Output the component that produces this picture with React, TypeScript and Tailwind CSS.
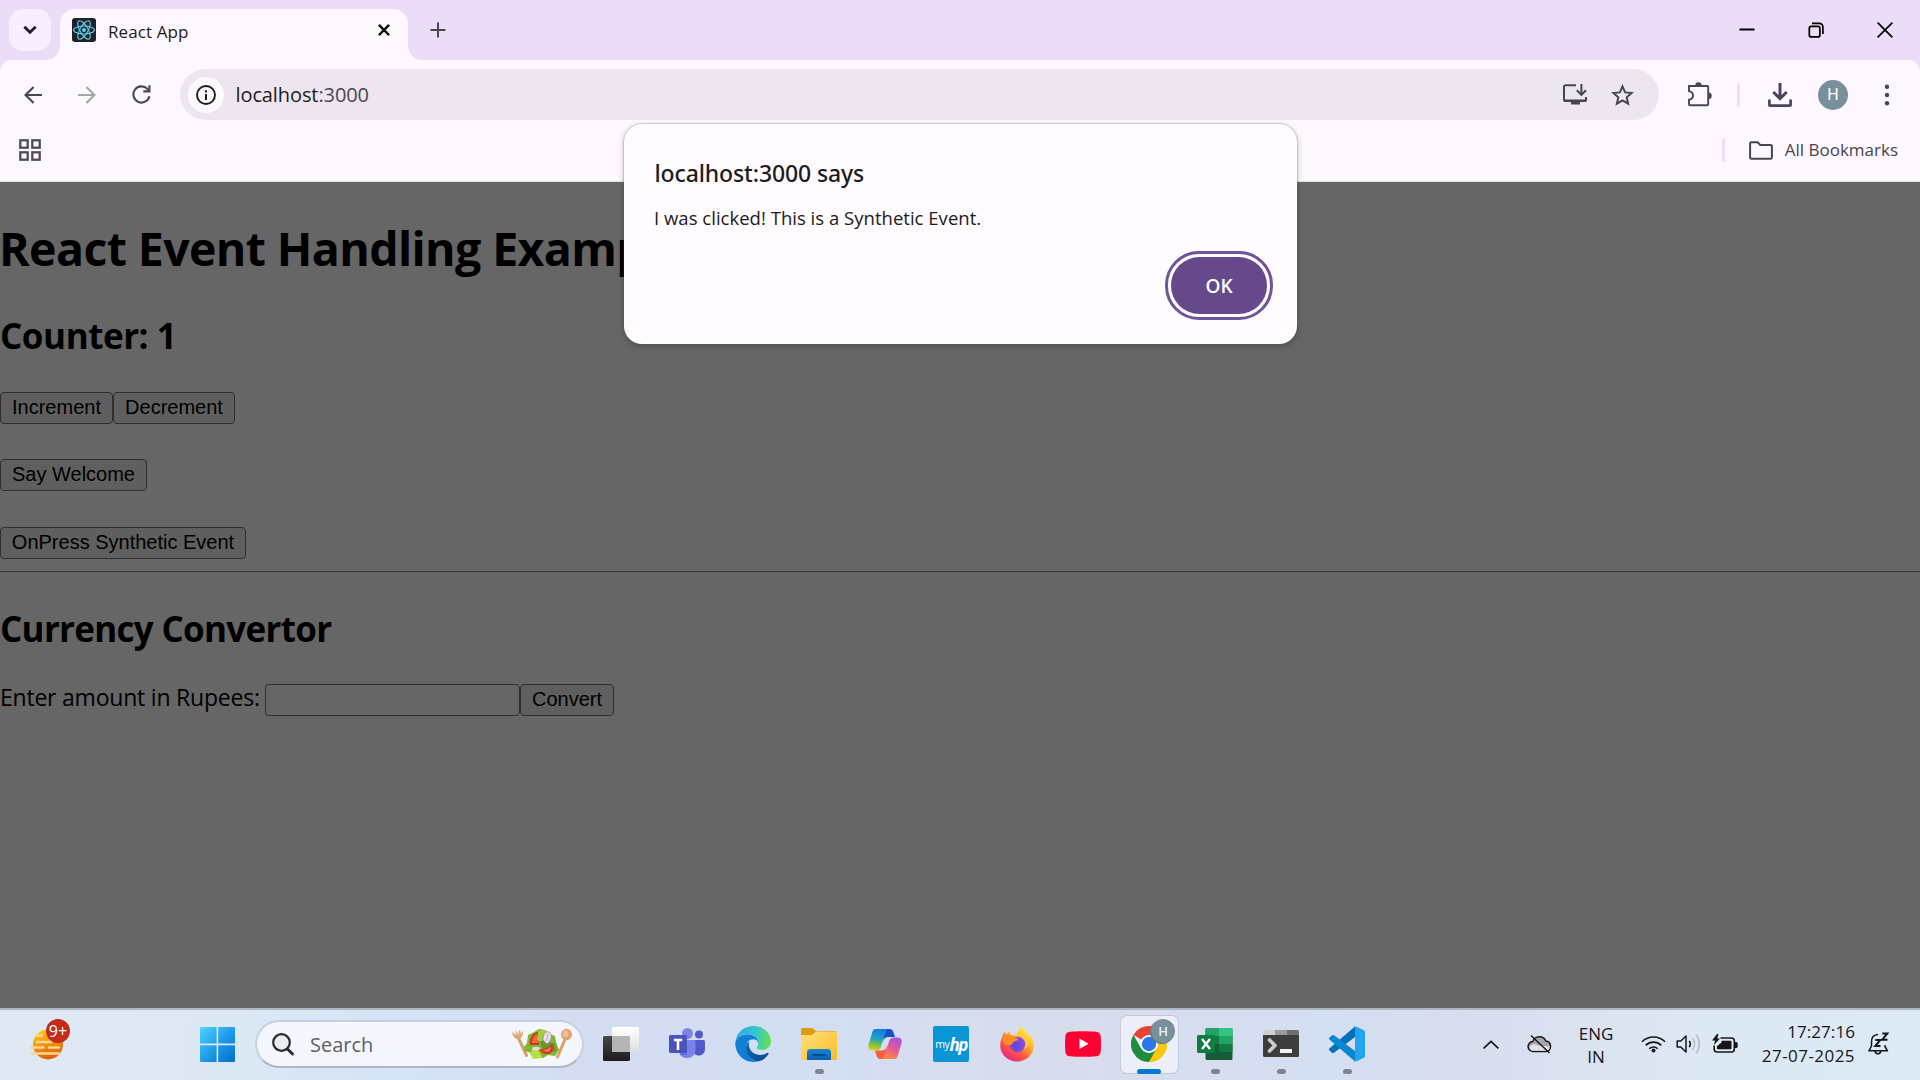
import React from "react";

/* ---------- Browser chrome ---------- */

function ReactFavicon() {
  return (
    <svg width="24" height="24" viewBox="0 0 24 24">
      <rect width="24" height="24" rx="3" fill="#20232a" />
      <g fill="none" stroke="#5fd3f0" strokeWidth="1.1">
        <ellipse cx="12" cy="12" rx="10.4" ry="4" />
        <ellipse cx="12" cy="12" rx="10.4" ry="4" transform="rotate(60 12 12)" />
        <ellipse cx="12" cy="12" rx="10.4" ry="4" transform="rotate(120 12 12)" />
      </g>
      <circle cx="12" cy="12" r="2" fill="#5fd3f0" />
    </svg>
  );
}

function TabStrip() {
  return (
    <div className="flex h-[60px] shrink-0 bg-[#ebddf7] pl-[9px]">
      <div className="mt-[9px] flex h-[42px] w-[42px] items-center justify-center rounded-[14px] bg-[#f9eeff]">
        <svg width="14" height="10" viewBox="0 0 14 10" fill="none" stroke="#1d1b20" strokeWidth="2.7">
          <path d="M1.3 1.7 7 7.3l5.7-5.6" />
        </svg>
      </div>
      <svg className="ml-[-6px] mt-[45px]" width="15" height="15" viewBox="0 0 15 15">
        <path d="M15 0v15H0C9 15 15 9 15 0Z" fill="#fef7ff" />
      </svg>
      <div className="mt-[9px] flex h-[51px] w-[348px] rounded-t-[15px] bg-[#fef7ff] pl-3">
        <div className="flex h-[42px] w-full items-center">
          <ReactFavicon />
          <span className="ml-3 mt-[3px] flex-1 text-[17px] leading-6 tracking-[0.09px] text-[#1d1b20]">React App</span>
          <svg className="mr-[18px]" width="12" height="12" viewBox="0 0 12 12" fill="none" stroke="#0f0d12" strokeWidth="2.4">
            <path d="m.9.9 10.2 10.2M11.1.9.9 11.1" />
          </svg>
        </div>
      </div>
      <svg className="mt-[45px]" width="15" height="15" viewBox="0 0 15 15">
        <path d="M0 0v15h15C6 15 0 9 0 0Z" fill="#fef7ff" />
      </svg>
      <svg className="ml-[7px] mt-[22px]" width="16" height="16" viewBox="0 0 16 16" stroke="#49454e" strokeWidth="2">
        <path d="M8 .5v15M.5 8h15" />
      </svg>
      <div className="ml-auto flex h-[59px] items-center pr-px">
        <div className="flex w-[69px] justify-center">
          <svg width="16" height="16" viewBox="0 0 16 16"><rect y="6.500" x=".5" width="15" height="2" fill="#000" /></svg>
        </div>
        <div className="flex w-[69px] justify-center">
          <svg width="16" height="16" viewBox="0 0 16 16" fill="none" stroke="#000" strokeWidth="1.7">
            <rect x="1.3" y="4.3" width="10.6" height="10.6" rx="2" />
            <path d="M4 1.3h7.2a3.7 3.7 0 0 1 3.7 3.7v7" />
          </svg>
        </div>
        <div className="flex w-[69px] justify-center">
          <svg width="16" height="16" viewBox="0 0 16 16" stroke="#000" strokeWidth="1.7">
            <path d="m.6.6 14.8 14.8M15.4.6.6 15.4" />
          </svg>
        </div>
      </div>
    </div>
  );
}

function Toolbar() {
  return (
    <div className="bg-[#ebddf7]">
      <div className="flex h-[69px] items-center rounded-t-[12px] bg-[#fef7ff] pl-[6px]">
        <div className="flex h-[51px] w-[54px] items-center justify-center">
          <svg width="18" height="18" viewBox="0 0 18 18" fill="none" stroke="#4a4458" strokeWidth="2.1">
            <path d="M18 9H1.8M9.6.9 1.5 9l8.1 8.1" />
          </svg>
        </div>
        <div className="flex h-[51px] w-[54px] items-center justify-center">
          <svg width="18" height="18" viewBox="0 0 18 18" fill="none" stroke="#a9a4ab" strokeWidth="2.1">
            <path d="M0 9h16.2M8.4.9 16.5 9l-8.1 8.1" />
          </svg>
        </div>
        <div className="flex h-[51px] w-[54px] items-center justify-center">
          <svg width="19" height="19" viewBox="0 0 19 19">
            <path d="M17.4 11.2A8.1 8.1 0 1 1 15.400 3.900L17.2 5.700" fill="none" stroke="#4a4458" strokeWidth="2.1" />
            <path d="M18.5.2v7.200h-7.200V5.300h5.100V.2Z" fill="#4a4458" />
          </svg>
        </div>
        <div className="ml-[12px] flex h-[51px] flex-1 items-center rounded-full bg-[#ede6f0] pl-[8px]">
          <div className="flex h-9 w-9 items-center justify-center rounded-full bg-[#fef7ff]">
            <svg width="20" height="20" viewBox="0 0 20 20">
              <circle cx="10" cy="10" r="9" fill="none" stroke="#1d1b20" strokeWidth="1.9" />
              <path d="M9 9h2v6H9zM9 5.2h2v2.200H9z" fill="#1d1b20" />
            </svg>
          </div>
          <span className="ml-[11.5px] flex-1 text-[20px] leading-7 tracking-[-0.1px] text-[#49454e]">
            <span className="text-[#1d1b20]">localhost</span>:3000
          </span>
          <svg className="mr-[24px]" width="24" height="22" viewBox="0 0 24 22">
            <path d="M13 1.200H2.600A1.600 1.600 0 0 0 1 2.800v12.600A1.600 1.600 0 0 0 2.600 17h18.800a1.600 1.600 0 0 0 1.600-1.600V13" fill="none" stroke="#49454e" strokeWidth="2" />
            <path d="M8 17h9v3.500H8zM1 15.500h22v1.800H1z" fill="#49454e" />
            <path d="M18.400 0v10M13.800 6.300l4.600 4.600 4.600-4.600" fill="none" stroke="#49454e" strokeWidth="2" />
          </svg>
          <svg className="mr-[25.5px]" width="23" height="22" viewBox="0 0 23 22" fill="none" stroke="#49454e" strokeWidth="2">
            <path d="m11.5 2.400 2.600 6 6.500.600-4.900 4.300 1.400 6.400-5.600-3.400-5.600 3.400 1.400-6.400L2.400 9l6.500-.600Z" />
          </svg>
        </div>
        <svg className="ml-[28px] mr-px" width="25" height="25" viewBox="0 0 25 25">
          <path d="M2 4h18.200a1 1 0 0 1 1 1v17.300a1 1 0 0 1-1 1H3a1 1 0 0 1-1-1v-4.600c5.300-.9 5.300-7.700 0-8.600Z" fill="none" stroke="#4a4458" strokeWidth="1.900" />
          <path d="M8.300 3.500a3.200 3.200 0 0 1 6.400 0ZM21.500 10.500a3.200 3.200 0 0 1 0 6.400Z" fill="#4a4458" />
        </svg>
        <div className="ml-[24px] h-6 w-[3px] rounded-full bg-[#eaddff]" />
        <svg className="ml-[28px]" width="24" height="24" viewBox="0 0 24 24" fill="none" stroke="#4a4458">
          <path d="M12 0v14.500M5.300 9l6.700 6.700L18.700 9" strokeWidth="3" />
          <path d="M1.400 16.500V22a.6.6 0 0 0 .6.600h20a.6.6 0 0 0 .6-.6v-5.500" strokeWidth="2.700" />
        </svg>
        <div className="ml-[26px] flex h-[30px] w-[30px] items-center justify-center rounded-full bg-[#78909c] font-['Roboto'] text-[16px] leading-none text-white">H</div>
        <svg className="ml-[36px] mr-[30px]" width="6" height="22" viewBox="0 0 6 22" fill="#4a4458">
          <circle cx="3" cy="2.700" r="2.200" />
          <circle cx="3" cy="11" r="2.200" />
          <circle cx="3" cy="19.300" r="2.200" />
        </svg>
      </div>
    </div>
  );
}

function BookmarksBar() {
  return (
    <div className="flex h-[53px] shrink-0 items-center border-b border-[#e7e0e9] bg-[#fef7ff] pb-[10px] pl-[19px] pr-[22px]">
      <svg width="22" height="22" viewBox="0 0 22 22" fill="none" stroke="#514b57" strokeWidth="2.300">
        <rect x="1.300" y="1.300" width="7.400" height="7.400" />
        <rect x="13.300" y="1.300" width="7.400" height="7.400" />
        <rect x="1.300" y="13.300" width="7.400" height="7.400" />
        <rect x="13.300" y="13.300" width="7.400" height="7.400" />
      </svg>
      <div className="ml-auto h-6 w-[3px] rounded-full bg-[#eaddff]" />
      <svg className="ml-[24px]" width="24" height="19" viewBox="0 0 24 19" fill="none" stroke="#49454e" strokeWidth="2">
        <path d="M2.400 1.200h6.200l2.600 2.700h10.400A1.300 1.300 0 0 1 22.900 5.200v11.200a1.400 1.400 0 0 1-1.400 1.400h-19a1.400 1.400 0 0 1-1.400-1.400V2.500a1.300 1.300 0 0 1 1.300-1.300Z" />
      </svg>
      <span className="ml-[12px] text-[17px] leading-6 text-[#49454e]">All Bookmarks</span>
    </div>
  );
}

/* ---------- Page behind the alert ---------- */

function PageButton({ label, width }: { label: string; width: string }) {
  return (
    <button className={`${width} h-8 whitespace-nowrap rounded-[4px] border border-[#2f2f2f] bg-[#5f5f5f] font-['Liberation_Sans',sans-serif] text-[20px] leading-[28px] text-black`}>
      <span className="block h-[30px] leading-[29px]">{label}</span>
    </button>
  );
}

function Page() {
  return (
    <div className="min-h-0 flex-1 bg-[#666666] pt-[34px] text-black">
      <h1 className="ml-[-1px] h-16 whitespace-nowrap text-[46.5px] font-bold leading-[64px] tracking-[-0.620px]">React Event Handling Example</h1>
      <h2 className="mt-[32px] text-[35px] font-bold leading-[48px] tracking-[-0.450px]">Counter: 1</h2>
      <div className="mt-[32px] flex">
        <PageButton label="Increment" width="w-[113px]" />
        <PageButton label="Decrement" width="w-[122px]" />
      </div>
      <div className="mt-[35px] flex"><PageButton label="Say Welcome" width="w-[147px]" /></div>
      <div className="mt-[36px] flex"><PageButton label="OnPress Synthetic Event" width="w-[246px]" /></div>
      <div className="mt-[12px] h-[2px] border-t border-[#3c3c3c] bg-[#626262]" />
      <h2 className="mt-[32px] text-[35px] font-bold leading-[48px] tracking-[-0.700px]">Currency Convertor</h2>
      <div className="mt-[31px] flex items-start">
        <span className="w-[265px] whitespace-nowrap text-[23px] leading-[27px] tracking-[-0.220px]">Enter amount in Rupees:</span>
        <input className="h-8 w-[255px] rounded-[4px] border border-[#2f2f2f] bg-[#666666]" />
        <PageButton label="Convert" width="w-[94px]" />
      </div>
    </div>
  );
}

function AlertDialog() {
  return (
    <div className="absolute left-[624px] top-[124px] flex h-[220px] w-[673px] flex-col rounded-[18px] bg-[#fffbff] px-[30px] pt-[33px] shadow-[0_0_0_1px_rgba(90,90,90,0.220),0_2px_6px_rgba(0,0,0,0.250)]">
      <div className="pl-[0.5px] font-['Noto_Sans',sans-serif] text-[23px] font-medium leading-8 tracking-[-0.120px] text-[#1d1b20]">localhost:3000 says</div>
      <div className="mt-[15px] text-[18.5px] leading-7 tracking-[0.020px] text-[#1d1b20]">I was clicked! This is a Synthetic Event.</div>
      <div className="mr-[-6px] mt-[19px] flex h-[69px] w-[108px] self-end rounded-[34px] border-[3px] border-[#6f539b] p-[3px]">
        <button className="h-[57px] flex-1 rounded-[29px] bg-[#65498a] pt-px text-[19px] font-semibold leading-[56px] text-white">OK</button>
      </div>
    </div>
  );
}

/* ---------- Taskbar ---------- */

function WeatherWidget() {
  return (
    <div className="relative h-[44px] w-[44px]">
      <svg width="44" height="44" viewBox="0 0 44 44">
        <defs>
          <linearGradient id="sun" x1="0" y1="0" x2=".3" y2="1">
            <stop offset="0" stopColor="#ffd400" />
            <stop offset=".5" stopColor="#f79a0c" />
            <stop offset="1" stopColor="#e4600a" />
          </linearGradient>
        </defs>
        <circle cx="20" cy="25.500" r="15" fill="url(#sun)" />
        <g stroke="#f3d794" strokeWidth="2.400" strokeLinecap="round">
          <path d="M9 16.500h5M9 23h14M3.500 28.500h12M21 28.500h10M3.500 34.500h28" />
        </g>
      </svg>
      <div className="absolute left-[18.500px] top-0 flex h-6 w-6 items-center justify-center rounded-full bg-[#c42b1c] text-[16px] leading-none text-white">9+</div>
    </div>
  );
}

function StartIcon() {
  return (
    <svg width="35" height="35" viewBox="0 0 35 35">
      <defs>
        <linearGradient id="win" gradientUnits="userSpaceOnUse" x1="0" y1="0" x2="35" y2="35">
          <stop offset="0" stopColor="#4ed2ff" />
          <stop offset=".55" stopColor="#1b98e8" />
          <stop offset="1" stopColor="#006fcb" />
        </linearGradient>
      </defs>
      <path d="M1 0h15.600v16.600H0V1a1 1 0 0 1 1-1ZM18.200 0H34a1 1 0 0 1 1 1v15.600H18.200ZM0 18.200h16.600V35H1a1 1 0 0 1-1-1ZM18.200 18.200H35V34a1 1 0 0 1-1 1H18.200Z" fill="url(#win)" />
    </svg>
  );
}

function SaladIcon() {
  return (
    <svg width="60" height="32" viewBox="0 0 60 32">
      <g stroke="#d9a066" strokeLinecap="round">
        <path d="m6 9 8.500 18.500M54 9l-8.500 20" strokeWidth="3" />
      </g>
      <path d="M.500 3.500C0 8 3 11.500 6.500 11S12 6 10.500 2.500L9.500 6 7 1.500 6.500 7 3.500 2.500 4 7.500Z" fill="#e0a96f" />
      <ellipse cx="54.500" cy="6.500" rx="5.500" ry="5.800" fill="#dfa56c" />
      <ellipse cx="53.500" cy="5.500" rx="3" ry="3.500" fill="#edc08e" />
      <path d="m12 19 3-4 1-8 6-3 5-3 6 1 5 4 5 2 1 6 3 8-4 6-7-1-5 3-8 0-4-5-6-2Z" fill="#7cb832" />
      <path d="M18 17c-1-6 2-12 8-13l1 13Z" fill="#d8301f" />
      <path d="M20 15c0-4 2-8 5-9l1 9Z" fill="#f06a45" />
      <path d="M26 4c4-4 8-2 10 1l-5 10-6-3Z" fill="#a4cf3d" />
      <path d="M28 14c5-5 9 2 15 1l1 8-12 3Z" fill="#5f9c28" />
      <path d="M31 12c0-6 3-9 6-8 4 3 2 9-2 12Z" fill="#efe3f3" stroke="#b98abf" strokeWidth="1" />
      <path d="M34 13c1-2 2-5 1.500-7" fill="none" stroke="#b98abf" strokeWidth="1" />
      <path d="M27 21c4 1 9-1 13-5 3 4 1 9-4 10-4 0-7-1-9-5Z" fill="#dd3420" />
      <path d="M30 22c4 0 6-1 9-3 0 3-2 5-4 5Z" fill="#f4805a" />
      <path d="M21 20c4 1 8 4 9 10l-9 1-3-5Z" fill="#b5e04a" />
      <ellipse cx="24" cy="20.500" rx="4" ry="1.800" fill="#ecd8ec" />
    </svg>
  );
}

function TaskViewIcon() {
  return (
    <svg width="36" height="36" viewBox="0 0 36 36">
      <defs>
        <linearGradient id="tvd" x1="0" y1="0" x2="0" y2="1"><stop offset="0" stopColor="#484848" /><stop offset="1" stopColor="#1c1c1c" /></linearGradient>
        <linearGradient id="tvl" x1="0" y1="0" x2="0" y2="1"><stop offset="0" stopColor="#ffffff" /><stop offset="1" stopColor="#dedede" /></linearGradient>
      </defs>
      <rect x="0" y="10" width="27" height="25" rx="1.500" fill="url(#tvd)" />
      <rect x="9" y="1" width="27" height="25" rx="1" fill="url(#tvl)" />
      <path d="M9 10h17a1 1 0 0 1 1 1v15H9Z" fill="#b5b5b5" />
    </svg>
  );
}

function TeamsIcon() {
  return (
    <svg width="36" height="36" viewBox="0 0 36 36">
      <circle cx="30" cy="8.500" r="4" fill="#5059c9" />
      <path d="M24 14h10.500a1.500 1.500 0 0 1 1.500 1.500V23c0 4-3 6.500-6 6.500S24 28 24 23Z" fill="#5059c9" />
      <circle cx="18.500" cy="7.500" r="5.500" fill="#7b83eb" />
      <path d="M10 14h15a1.500 1.500 0 0 1 1.500 1.500V25a8.500 8.500 0 0 1-16.500 1Z" fill="#7b83eb" />
      <path d="M10 14h8v15h-7Z" fill="#5a62c4" opacity=".6" />
      <rect x="0" y="9" width="18" height="18" rx="1.500" fill="#4b53bc" />
      <path d="M4.800 12.800h8.400v2.400h-2.900V24H7.700v-8.800H4.800Z" fill="#fff" />
    </svg>
  );
}

function EdgeIcon() {
  return (
    <svg width="36" height="36" viewBox="0 0 36 36">
      <defs>
        <linearGradient id="eg1" x1="0" y1=".4" x2="1" y2=".5">
          <stop offset="0" stopColor="#2aa6e8" /><stop offset=".55" stopColor="#35c7cf" /><stop offset="1" stopColor="#63e04f" />
        </linearGradient>
        <linearGradient id="eg2" x1="0" y1="0" x2=".6" y2="1"><stop offset="0" stopColor="#1380cf" /><stop offset="1" stopColor="#0c7cdc" /></linearGradient>
        <linearGradient id="eg3" x1="0" y1="0" x2="1" y2="1"><stop offset="0" stopColor="#0b68b8" /><stop offset="1" stopColor="#0d4a94" /></linearGradient>
      </defs>
      <path d="M.500 16C1.500 6.500 9 0 18.500 0 29 0 36 7.500 36 15.500c0 5-3.700 8.300-8.500 8.300-3.500 0-5.800-1-5.800-2.300 0-.8 1.500-1.500 1.500-4C23.200 12 18 8 12 8 6 8 2 11.500.500 16Z" fill="url(#eg1)" />
      <path d="M.200 17.500C1 12 6 8.300 12 8.300c6.500 0 11.200 4 11.200 8.500 0 0-1-3.500-5-3.500-5 0-8.200 5-6.700 11.200C13 31 17.500 34.800 22 35.500 10 38 .5 29 .2 17.500Z" fill="url(#eg2)" />
      <path d="M13.500 16C8.500 20 11 32.500 21.500 35.500c5.500 0 9.500-3.500 12-7.500.500-1-.500-1.500-1.300-1-8 4.500-17 .5-18.200-7-.2-1.500-.3-3 .5-4Z" fill="url(#eg3)" />
    </svg>
  );
}

function ExplorerIcon() {
  return (
    <svg width="36" height="36" viewBox="0 0 36 36">
      <defs>
        <linearGradient id="fo" x1="0" y1="0" x2="1" y2="1"><stop offset="0" stopColor="#ffe07a" /><stop offset="1" stopColor="#fbbd24" /></linearGradient>
        <linearGradient id="fb" x1="0" y1="0" x2="0" y2="1"><stop offset="0" stopColor="#1686d9" /><stop offset="1" stopColor="#0a5fae" /></linearGradient>
      </defs>
      <path d="M1.500 2h9.800l3.700 3H35v5H0V3.500A1.500 1.500 0 0 1 1.500 2Z" fill="#dd9c0b" />
      <path d="M0 9h11l4-3.500h19.500A1.500 1.500 0 0 1 36 7v26a1 1 0 0 1-1 1H1a1 1 0 0 1-1-1Z" fill="url(#fo)" />
      <path d="M6 34v-7.500A3.500 3.500 0 0 1 9.500 23h17a3.500 3.500 0 0 1 3.500 3.500V34Z" fill="url(#fb)" />
      <path d="M11 29h14" stroke="#0a4a86" strokeWidth="1.800" />
    </svg>
  );
}

function CopilotIcon() {
  return (
    <svg width="36" height="36" viewBox="0 0 36 36">
      <defs>
        <linearGradient id="cp1" x1=".5" y1="0" x2=".3" y2="1"><stop offset="0" stopColor="#0d7fe0" /><stop offset=".45" stopColor="#22a3c4" /><stop offset=".7" stopColor="#6cc04a" /><stop offset="1" stopColor="#e8cc1c" /></linearGradient>
        <linearGradient id="cp2" x1=".7" y1="0" x2=".3" y2="1"><stop offset="0" stopColor="#a753e0" /><stop offset=".45" stopColor="#e0569b" /><stop offset="1" stopColor="#ff8a3c" /></linearGradient>
      </defs>
      <path d="M18 3h4.500c2.500 0 3.300 1.500 4 3.500L28 11h-6c-4 0-5 2-6 5Z" fill="#1a4fc4" />
      <path d="M18 33h-4.500c-2.500 0-3.300-1.500-4-3.500L8 24.500h6c4 0 5-2 6-5Z" fill="#f2603d" />
      <path d="M8.500 3H22c-2 0-3 1.500-3.700 4L14 20.500c-.9 3-2.500 4-5 4H5.500C1.500 24.500.700 21.500 1.700 18L5 7c.8-2.500 1.500-4 3.500-4Z" fill="url(#cp1)" />
      <path d="M27.500 33H14c2 0 3-1.500 3.700-4L22 15.500c.9-3 2.500-4 5-4h3.500c4 0 4.800 3 3.800 6.500L31 29c-.8 2.500-1.500 4-3.500 4Z" fill="url(#cp2)" />
    </svg>
  );
}

function MyHpIcon() {
  return (
    <div className="flex h-9 w-9 items-center justify-center rounded-[2px] bg-[#0a96d6] text-white">
      <span className="text-[10.500px] leading-none tracking-[-0.400px]">my</span>
      <span className="text-[17px] font-bold italic leading-none tracking-[-1.500px]">hp</span>
    </div>
  );
}

function FirefoxIcon() {
  return (
    <svg width="36" height="36" viewBox="0 0 36 36">
      <defs>
        <linearGradient id="ff1" x1=".85" y1=".1" x2=".25" y2="1"><stop offset="0" stopColor="#fff14a" /><stop offset=".35" stopColor="#ffb32c" /><stop offset=".65" stopColor="#ff5a3a" /><stop offset="1" stopColor="#e5208c" /></linearGradient>
        <radialGradient id="ff2" cx=".4" cy=".6" r=".7"><stop offset="0" stopColor="#5b46d8" /><stop offset="1" stopColor="#9a4be8" /></radialGradient>
      </defs>
      <path d="M22.500 0c1 3 5 5.500 6.500 8 4 2.500 6 7 5.800 12C34.500 29 27 35.500 18 35.500S1.200 28.500 1.200 19.500c0-4 1-6.500 2-8 .300-3 1.800-5 2.800-6 .200 1.800.700 2.500 1.200 3 1.500-1.300 2.300-3 3.800-3.500-.3 2 .2 3.500 1 4 2-.6 5 0 6 1 0-4 1.500-8 4.500-10Z" fill="url(#ff1)" />
      <circle cx="18.500" cy="18.500" r="7.800" fill="url(#ff2)" />
      <path d="M3.500 14c2-4 4-5.500 8-5 1.500 2 4.500 3 7.500 3.500.5 1.500-1.500 2.500-4 2.800-1 1.500-1.500 3-3.500 3.700-3 0-6 1.500-8-5Z" fill="#ff8f20" />
      <path d="M16 9.500c4-2 9 0 10.500 5 1 4-.5 7-2 9 6-2 6-11 1-15-3-2-7-2-9.500 1Z" fill="#ffce3a" />
    </svg>
  );
}

function YouTubeIcon() {
  return (
    <svg width="36" height="26" viewBox="0 0 36 26">
      <path d="M5 .700C12 0 24 0 31 .700c3 .3 4.300 1.600 4.600 4.300.5 5 .5 11 0 16-.3 2.700-1.600 4-4.600 4.300-7 .700-19 .700-26 0C2 25 .700 23.700.400 21c-.5-5-.5-11 0-16C.700 2.300 2 1 5 .700Z" fill="#ff0033" />
      <path d="m14.500 7.500 9 5.300-9 5.300Z" fill="#fff" />
    </svg>
  );
}

function ChromeIcon() {
  return (
    <div className="relative h-9 w-9">
      <svg width="36" height="36" viewBox="0 0 36 36">
        <path d="M18 18 2.400 9A18 18 0 0 1 33.600 9Z" fill="#ea4335" />
        <path d="M18 18V9h15.600A18 18 0 0 1 18 36Z" fill="#fbbc04" />
        <path d="m10.200 22.500-7.800-13.500A18 18 0 0 0 18 36l7.800-13.500Z" fill="#1e8e3e" />
        <path d="M18 9h15.600A18 18 0 0 1 18 36l7.800-13.500Z" fill="#fcc510" />
        <circle cx="18" cy="18" r="9" fill="#fff" />
        <circle cx="18" cy="18" r="7.200" fill="#2b78ee" />
      </svg>
      <div className="absolute left-[20px] top-[-7px] flex h-6 w-6 items-center justify-center rounded-full bg-[#78909c] font-['Roboto'] text-[13px] font-medium leading-none text-[#e8eef0] shadow-[-1px_1px_0_#5f7580]">H</div>
    </div>
  );
}

function ExcelIcon() {
  return (
    <svg width="36" height="36" viewBox="0 0 36 36">
      <rect x="8.500" y="2" width="27" height="32" rx="1.500" fill="#185c37" />
      <path d="M10 2h12v8H8.500V3.500A1.500 1.500 0 0 1 10 2Z" fill="#21a366" />
      <path d="M22 2h12a1.500 1.500 0 0 1 1.500 1.500V10H22Z" fill="#33c481" />
      <path d="M8.500 10H22v8H8.500Z" fill="#107c41" />
      <path d="M22 10h13.500v8H22Z" fill="#21a366" />
      <path d="M22 18h13.500v8H22Z" fill="#107c41" />
      <rect x="0" y="9" width="18" height="18" rx="1.500" fill="#107c41" />
      <path d="m5 13 8 10M13 13 5 23" stroke="#fff" strokeWidth="2.400" />
    </svg>
  );
}

function TerminalIcon() {
  return (
    <svg width="36" height="36" viewBox="0 0 36 36">
      <path d="M0 9h36v20.500a1.500 1.500 0 0 1-1.500 1.500h-33A1.500 1.500 0 0 1 0 29.500Z" fill="#3d3d3d" />
      <path d="M1.500 4H12v5H0V5.500A1.500 1.500 0 0 1 1.500 4Z" fill="#cfcfcf" />
      <path d="M12 4h12v5H12Z" fill="#9b9b9b" />
      <path d="M24 4h10.500A1.500 1.500 0 0 1 36 5.500V9H24Z" fill="#6f6f6f" />
      <path d="m6.500 14 5.500 5.500L6.500 25" fill="none" stroke="#cccccc" strokeWidth="3.600" strokeLinejoin="round" strokeLinecap="round" />
      <path d="M17 23h12v4H17Z" fill="#f2f2f2" />
    </svg>
  );
}

function VsCodeIcon() {
  return (
    <svg width="36" height="36" viewBox="0 0 36 36">
      <path d="M26 .500v10.500L5 26.700a1.600 1.600 0 0 1-2 0L.600 24.500a1.500 1.500 0 0 1 0-2.300Z" fill="#0070b8" />
      <path d="M26 35.500V25L5 9.300a1.600 1.600 0 0 0-2 0L.600 11.500a1.500 1.500 0 0 0 0 2.300Z" fill="#0a86d3" />
      <path d="m26.500.300 8 3.600A2.500 2.500 0 0 1 36 6.200v23.600a2.500 2.500 0 0 1-1.500 2.300l-8 3.600C27 35 26.500 34.500 26.500 33V3c0-1.500.5-2 0-2.700Z" fill="#23a3f1" />
      <path d="M24.500 35.500c1.200.500 2.500-.5 2.500-2V2.500c0-1.500-1.300-2.500-2.500-2 1 .500 1.500 1 1.500 2v31c0 1-.500 1.500-1.500 2Z" fill="#23a3f1" />
    </svg>
  );
}

function TaskbarApp({ children, state = "idle" }: { children: React.ReactNode; state?: "idle" | "running" | "active" }) {
  return (
    <div className="flex h-[66px] w-[66px] items-center justify-center">
      <div
        className={
          state === "active"
            ? "relative flex h-[57px] w-[57px] items-center justify-center rounded-[6px] bg-[#eceff8] shadow-[0_0_0_1px_rgba(150,160,185,0.300)]"
            : "relative flex h-[57px] w-[57px] items-center justify-center"
        }
      >
        {children}
        {state === "active" && <div className="absolute bottom-[-1px] left-[16px] h-[5px] w-6 rounded-full bg-[#0078d4]" />}
        {state === "running" && <div className="absolute bottom-[-1px] left-[24px] h-[5px] w-[9px] rounded-full bg-[#7f838d]" />}
      </div>
    </div>
  );
}

function Tray() {
  return (
    <div className="ml-auto flex items-center pr-[29px] text-[#16171a]">
      <div className="flex w-12 justify-center">
        <svg width="16" height="9" viewBox="0 0 16 9" fill="none" stroke="currentColor" strokeWidth="1.700"><path d="m.6 8.400 7.400-7 7.400 7" /></svg>
      </div>
      <div className="flex w-12 justify-center">
        <svg width="25" height="20" viewBox="0 0 25 20">
          <path d="M6.300 17.500a5 5 0 0 1-.5-10A7 7 0 0 1 18.800 7a5.300 5.300 0 0 1 .3 10.500Z" fill="#a8a8ac" stroke="#1a1a1a" strokeWidth="1.500" />
          <path d="M2.500 13.500c1.500-4 6-4 8-2l12 1c.5 2.500-1 4.300-3.500 4.300H6.500c-2 0-3.500-1.300-4-3.300Z" fill="#e3e3e6" />
          <path d="M4 1.500 22.500 19" stroke="#1a1a1a" strokeWidth="1.500" />
        </svg>
      </div>
      <div className="mt-[2px] w-[66px] text-center text-[17px] leading-[23px] tracking-[-0.100px]">ENG<br />IN</div>
      <div className="ml-[6px] flex w-9 justify-center">
        <svg width="25" height="18" viewBox="0 0 25 18" fill="none" stroke="currentColor" strokeWidth="1.600">
          <path d="M1 6.800a16.300 16.300 0 0 1 23 0M4.700 10.400a11 11 0 0 1 15.600 0M8.300 13.700a6 6 0 0 1 8.400 0" />
          <circle cx="12.500" cy="15.500" r="2" fill="currentColor" stroke="none" />
        </svg>
      </div>
      <div className="flex w-[35px] justify-center">
        <svg width="25" height="20" viewBox="0 0 25 20" fill="none" stroke="currentColor" strokeWidth="1.500">
          <path d="M1.200 7h3.600L10 2v16l-5.200-5H1.200ZM13.300 6.800c1.300 2 1.300 4.400 0 6.400" strokeLinejoin="round" />
          <path d="M16.500 4c2.800 3.500 2.800 8.500 0 12M20 .8c4.500 5.400 4.500 13 0 18.400" stroke="#b3bcc5" />
        </svg>
      </div>
      <div className="ml-[1px] flex w-9 justify-center">
        <svg width="26" height="20" viewBox="0 0 26 20">
          <path d="M8.500 4h11a2.800 2.800 0 0 1 2.800 2.800v8.400a2.800 2.800 0 0 1-2.800 2.800H5a2.800 2.800 0 0 1-2.800-2.800V11.500" fill="none" stroke="currentColor" strokeWidth="1.600" />
          <path d="M10 6.800h8.500a1 1 0 0 1 1 1v6.500a1 1 0 0 1-1 1H6a1 1 0 0 1-1-1V12l4-3ZM23 8h1.200a1.500 1.500 0 0 1 1.500 1.500v3a1.500 1.500 0 0 1-1.500 1.500H23Z" fill="currentColor" />
          <path d="M5 0 0 6.500h3L2 11l6-6.500H5.300L6.500 0Z" fill="currentColor" />
        </svg>
      </div>
      <div className="w-[112px] text-right text-[17px] leading-6">
        <div className="tracking-[0.070px]">17:27:16</div>
        <div className="tracking-[0.450px]">27-07-2025</div>
      </div>
      <svg className="ml-[12px]" width="24" height="24" viewBox="0 0 24 24" fill="none" stroke="currentColor" strokeWidth="1.500">
        <path d="M11 2.500c-4 .3-6.500 3-6.500 7V14l-2.600 4.800h18.600L18 14.500V13M8 19.500c.8 3 5 3 5.800 0" strokeLinejoin="round" />
        <path d="M8.300 8h5l-5 6h5.200M15.300 1.500h5l-5 6.200h5.200" strokeWidth="2" />
      </svg>
    </div>
  );
}

function Taskbar() {
  return (
    <div className="flex h-[72px] shrink-0 items-center border-t-2 border-[#aeb7c1] bg-[linear-gradient(90deg,#dfe9f4_0%,#dce8f4_12%,#d4e4f5_21%,#d3dcf0_31%,#d3def2_43%,#d8dcec_57%,#d3dff2_69%,#d9ddee_77%,#dce8f3_88%,#dceaf6_100%)] pb-[2px]">
      <div className="w-[184px] pl-[27.500px]"><div className="mt-[-7px] h-[44px]"><WeatherWidget /></div></div>
      <div className="flex w-[66px] justify-center"><StartIcon /></div>
      <div className="ml-[5px] flex h-12 w-[329px] items-center rounded-full border-2 border-[#c5d0e1] border-b-[#acb6c8] bg-[#f3f6fc] pl-[15px] pr-[10px]">
        <svg className="mt-px" width="22" height="23" viewBox="0 0 22 23" fill="none" stroke="#2a2a2a" strokeLinecap="round">
          <circle cx="9.500" cy="9.500" r="8.300" strokeWidth="2.200" fill="#e9ecf2" />
          <path d="m15.500 16 5 5" strokeWidth="2.900" />
        </svg>
        <span className="ml-[16px] mt-px flex-1 text-[20px] leading-7 text-[#5d5f63]">Search</span>
        <SaladIcon />
      </div>
      <div className="ml-[4px] flex">
        <TaskbarApp><TaskViewIcon /></TaskbarApp>
        <TaskbarApp><TeamsIcon /></TaskbarApp>
        <TaskbarApp><EdgeIcon /></TaskbarApp>
        <TaskbarApp state="running"><ExplorerIcon /></TaskbarApp>
        <TaskbarApp><CopilotIcon /></TaskbarApp>
        <TaskbarApp><MyHpIcon /></TaskbarApp>
        <TaskbarApp><FirefoxIcon /></TaskbarApp>
        <TaskbarApp><YouTubeIcon /></TaskbarApp>
        <TaskbarApp state="active"><ChromeIcon /></TaskbarApp>
        <TaskbarApp state="running"><ExcelIcon /></TaskbarApp>
        <TaskbarApp state="running"><TerminalIcon /></TaskbarApp>
        <TaskbarApp state="running"><VsCodeIcon /></TaskbarApp>
      </div>
      <Tray />
    </div>
  );
}

export default function App() {
  return (
    <div className="relative flex h-[1080px] w-[1920px] flex-col overflow-hidden bg-[#666666] font-['Open_Sans','Noto_Sans',sans-serif]">
      <TabStrip />
      <Toolbar />
      <BookmarksBar />
      <Page />
      <Taskbar />
      <AlertDialog />
    </div>
  );
}
